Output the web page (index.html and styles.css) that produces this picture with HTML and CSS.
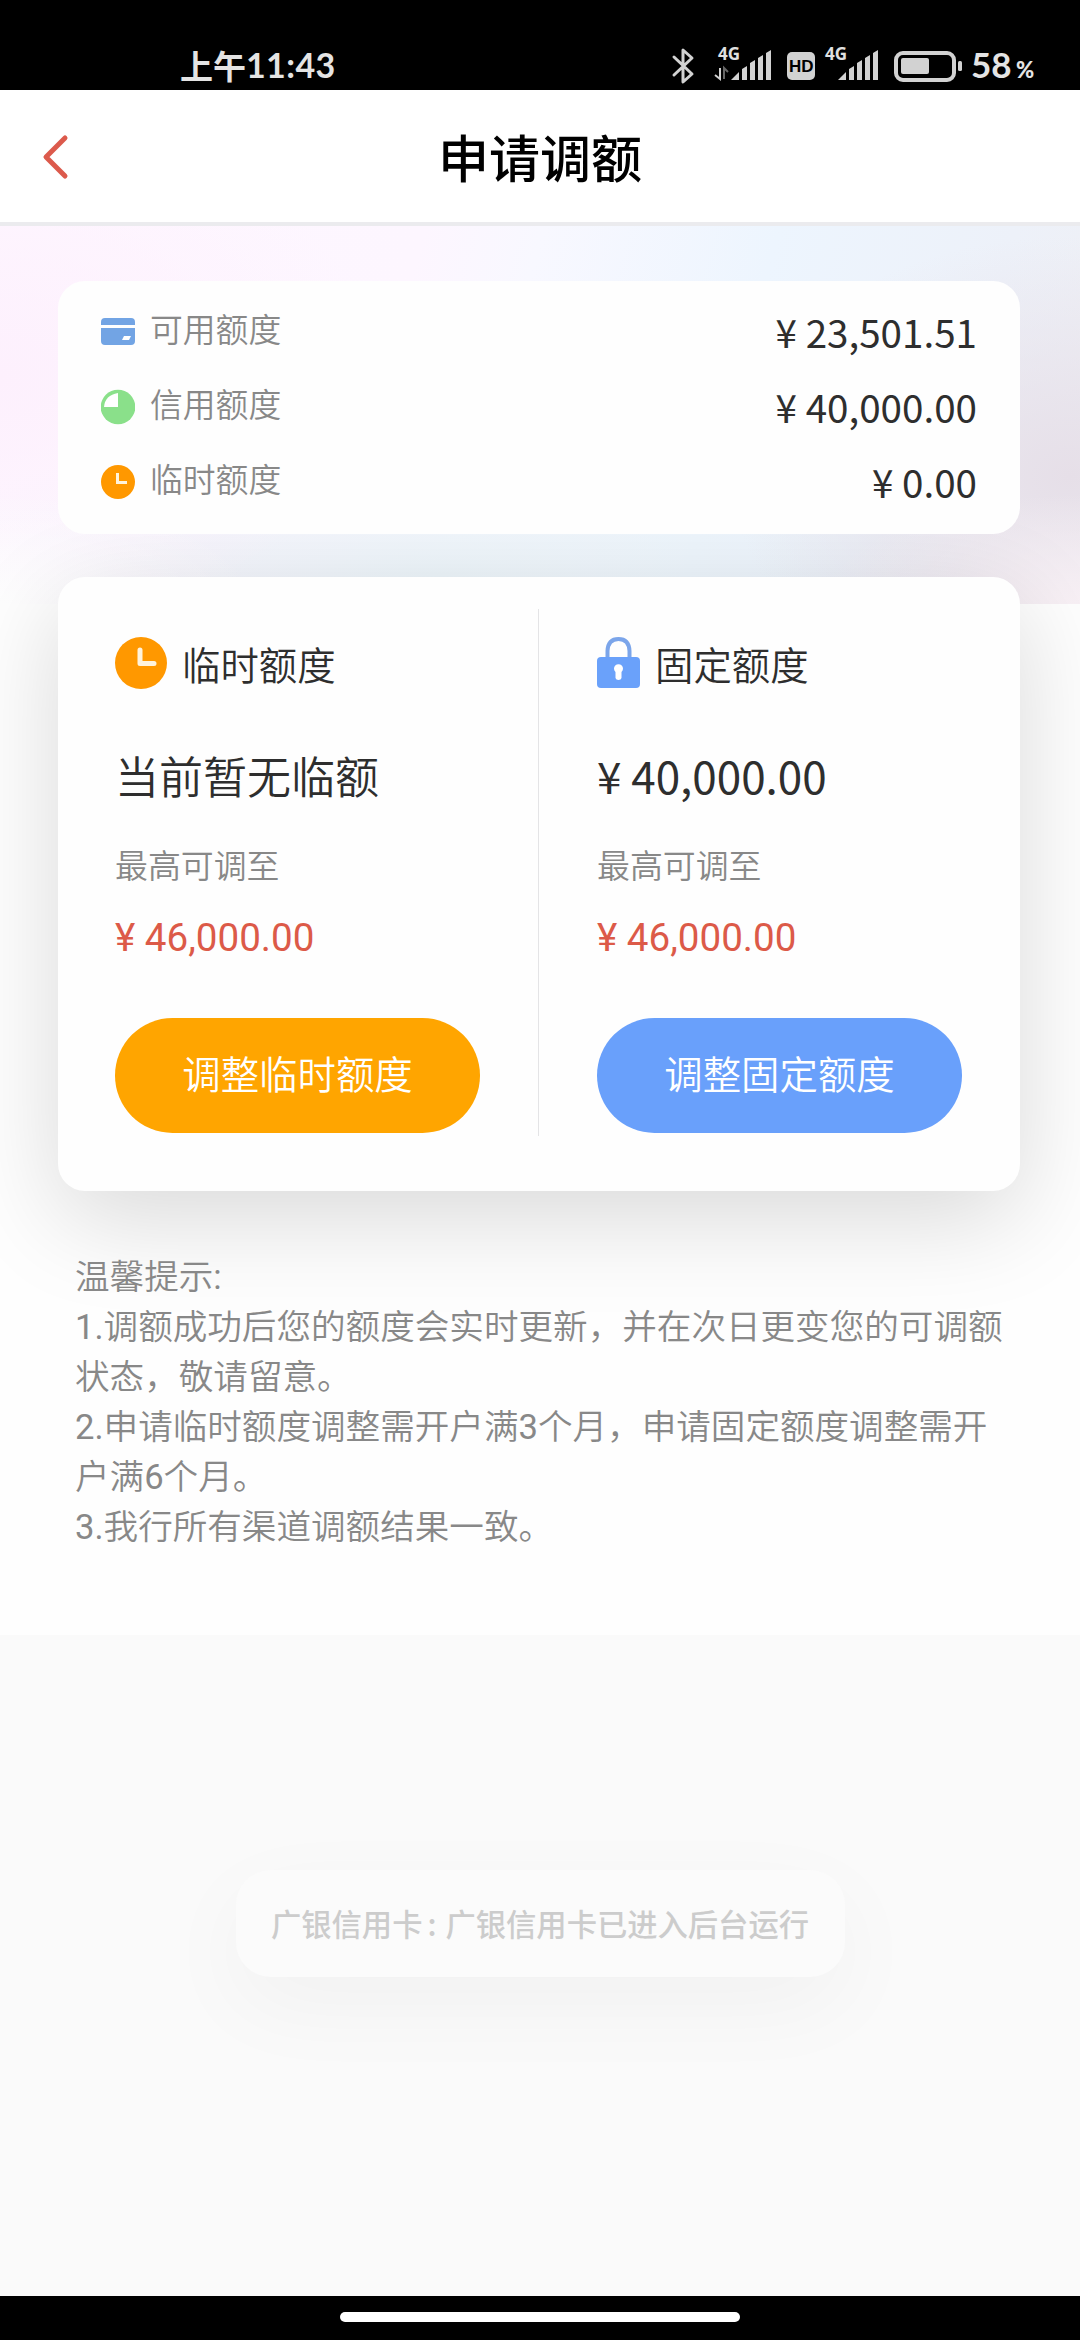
FILE: index.html
```html
<!DOCTYPE html>
<html lang="zh-CN">
<head>
<meta charset="utf-8">
<title>申请调额</title>
<link rel="stylesheet" href="styles.css">
</head>
<body>
<div class="screen">
  <div class="status">
    <span class="time">上午<b class="clock">11:43</b></span>
    <svg class="status-icons" width="390" height="46" viewBox="0 -4 390 46">
      <g fill="none" stroke="#d2d2d2" stroke-width="3" stroke-linejoin="round" stroke-linecap="round">
        <path d="M4 11L22 28L13 36V4L22 12L4 29"/>
      </g>
      <text class="net" x="48" y="14">4G</text>
      <path d="M50 22V33L45 29" fill="none" stroke="#d2d2d2" stroke-width="2"/>
      <path d="M54 33V22L58 26" fill="none" stroke="#666" stroke-width="2"/>
      <g fill="#d2d2d2">
        <path d="M61 34L69 26V34ZM72 23L77 20V34H72ZM80 17L85 14V34H80ZM88 12L93 9V34H88ZM96 7L101 4V34H96Z"/>
        <rect x="117" y="6" width="28" height="28" rx="5"/>
        <path d="M168 34L176 26V34ZM179 23L184 20V34H179ZM187 17L192 14V34H187ZM195 12L200 9V34H195ZM203 7L208 4V34H203Z"/>
        <rect x="231" y="12" width="28" height="16" rx="2"/>
        <rect x="288" y="15" width="4" height="10" rx="1.5"/>
      </g>
      <text class="hd" x="119" y="26">HD</text>
      <text class="net" x="155" y="14">4G</text>
      <rect x="226" y="7" width="58" height="27" rx="7" fill="none" stroke="#d2d2d2" stroke-width="4"/>
      <text class="battery" x="301" y="32">58</text>
      <text class="percent" x="346" y="32">%</text>
    </svg>
  </div>
  <header class="header">
    <svg class="back" width="30" height="48" viewBox="0 0 30 48"><path d="M23 5L4 24L23 43" fill="none" stroke="#dc5a4c" stroke-width="5" stroke-linecap="round" stroke-linejoin="round"/></svg>
    <h1 class="title">申请调额</h1>
  </header>
  <main class="page">
    <section class="summary">
      <div class="row">
        <svg width="34" height="36" viewBox="0 0 34 36"><path d="M4 4H30Q34 4 34 8V11H0V8Q0 4 4 4ZM0 14H34V27Q34 31 30 31H4Q0 31 0 27Z" fill="#72a4e4"/><path d="M23 22H30L28 26H21Z" fill="#fff"/></svg>
        <span class="label">可用额度</span><span class="value">¥ 23,501.51</span>
      </div>
      <div class="row">
        <svg width="34" height="36" viewBox="0 0 34 36"><circle cx="17" cy="18" r="17.3" fill="#8ae08a"/><path d="M17 4V18H3Q4 6 17 4Z" fill="#fff"/></svg>
        <span class="label">信用额度</span><span class="value">¥ 40,000.00</span>
      </div>
      <div class="row">
        <svg width="34" height="36" viewBox="0 0 34 36"><circle cx="17" cy="18" r="17" fill="#ff9800"/><path d="M16.5 9V18.5H26" fill="none" stroke="#fff3dd" stroke-width="3"/></svg>
        <span class="label">临时额度</span><span class="value">¥ 0.00</span>
      </div>
    </section>
    <section class="limits">
      <div class="limit">
        <div class="limit-head">
          <svg width="52" height="52" viewBox="0 0 52 52"><circle cx="26" cy="26" r="26" fill="#ff9800"/><path d="M25 13V26.500H39" fill="none" stroke="#fff3dd" stroke-width="5" stroke-linecap="round" stroke-linejoin="round"/></svg>
          <span>临时额度</span>
        </div>
        <div class="current">当前暂无临额</div>
        <div class="caption">最高可调至</div>
        <div class="maximum">¥ 46,000.00</div>
        <button class="button button-temp">调整临时额度</button>
      </div>
      <div class="divider"></div>
      <div class="limit">
        <div class="limit-head">
          <svg width="43" height="52" viewBox="0 0 43 52"><path d="M10.500 22V14Q11 2 21.500 2T32.500 14V22" fill="none" stroke="#7ba5ea" stroke-width="4"/><rect y="20" width="43" height="31" rx="4" fill="#6aa1fa"/><path d="M18.500 35A4.500 4.500 0 1 1 24.500 35V41Q24 43 21.500 43T18.500 41Z" fill="#fff"/></svg>
          <span>固定额度</span>
        </div>
        <div class="current current-amount">¥ 40,000.00</div>
        <div class="caption">最高可调至</div>
        <div class="maximum">¥ 46,000.00</div>
        <button class="button button-fixed">调整固定额度</button>
      </div>
    </section>
    <section class="tips">
      <p>温馨提示:</p>
      <p>1.调额成功后您的额度会实时更新，并在次日更变您的可调额<br>状态，敬请留意。</p>
      <p>2.申请临时额度调整需开户满3个月，申请固定额度调整需开<br>户满6个月。</p>
      <p>3.我行所有渠道调额结果一致。</p>
    </section>
  </main>
  <div class="rest">
    <div class="toast">广银信用卡<span class="colon">:</span>广银信用卡已进入后台运行</div>
  </div>
  <div class="navbar"><div class="handle"></div></div>
</div>
</body>
</html>
```
FILE: styles.css
```css
* { box-sizing: border-box; }
body { margin: 0; font-family: "Noto Sans CJK SC", sans-serif; font-weight: 350; color: #2e2e2e; }
p, h1 { margin: 0; }
svg { display: block; flex: none; }
.screen { display: flex; flex-direction: column; width: 1080px; height: 2340px; background: #fafafa; overflow: hidden; }

.status { display: flex; justify-content: space-between; height: 90px; padding: 40px 20px 0 180px; background: #000; color: #e4e4e4; }
.status-icons { overflow: visible; margin-top: 2px; }
.time { display: flex; font: 700 33px/50px "Noto Sans CJK SC", sans-serif; }
.clock { font: 700 34px/50px Lato, sans-serif; letter-spacing: .4px; }
.net { font: 700 17px "Noto Sans", sans-serif; fill: #e0e0e0; }
.hd { font: 700 17px "Liberation Sans", sans-serif; fill: #000; }
.battery { font: 700 35px Lato, sans-serif; fill: #e4e4e4; }
.percent { font: 900 22px Lato, sans-serif; fill: #e4e4e4; }

.header { display: grid; grid-template-columns: 180px 1fr 180px; align-items: center; height: 136px; border-bottom: 4px solid #ebebee; background: #fff; }
.back { margin: 2px 0 0 42px; }
.title { color: #000; font-size: 51px; font-weight: 500; line-height: 60px; text-align: center; }

.page {
  height: 1409px; padding: 55px 60px 0 58px;
  background:
    radial-gradient(ellipse 260px 110px at 0 378px, #fefefe 0%, #fefefe00 100%) 0 0 / 100% 378px no-repeat,
    radial-gradient(ellipse 260px 110px at 1080px 378px, #f8f0f5 0%, #f8f0f500 100%) 0 0 / 100% 378px no-repeat,
    radial-gradient(ellipse 380px 260px at 0 150px, #fdf0fd 0%, #fdf0fd00 100%) 0 0 / 100% 378px no-repeat,
    radial-gradient(ellipse 340px 240px at 1070px 250px, #e6dfe8 0%, #e6dfe800 100%) 0 0 / 100% 378px no-repeat,
    radial-gradient(ellipse 560px 150px at 440px 350px, #edf5fa 0%, #edf5fa00 100%) 0 0 / 100% 378px no-repeat,
    linear-gradient(105deg, #fef7ff 0%, #fdf6ff 36%, #f8f8ff 46%, #edf5fe 66%, #edf1f9 86%, #efeff4 100%) 0 0 / 100% 378px no-repeat,
    #fefefe;
}
.summary { position: relative; height: 253px; padding: 12px 43px 0 43px; border-radius: 27px; background: #fefefe; }
.row { display: flex; align-items: center; height: 75px; }
.row svg { margin-top: 2px; }
.label { margin: -6px auto 0 15px; color: #888; font-size: 32.8px; line-height: 48px; }
.value { font-size: 38.6px; font-weight: 400; line-height: 48px; }

.limits { display: flex; height: 614px; margin-top: 43px; padding: 32px 58px 0 57px; border-radius: 27px; background: #fefefe; box-shadow: 0 27px 100px rgba(0, 0, 0, .15); }
.limit { width: 365px; padding-top: 28px; }
.divider { width: 2px; height: 527px; margin: 0 58px 0 58px; background: #e4e4e6; }
.limit-head { display: flex; gap: 15px; height: 52px; font-size: 38.4px; line-height: 52px; }
.current { margin-top: 58px; font-size: 44px; line-height: 56px; }
.current-amount { font-weight: 400; }
.caption { margin-top: 37px; color: #888; font-size: 32.9px; line-height: 48px; }
.maximum { margin-top: 26px; color: #dc5a48; font: 38.6px/48px Roboto, sans-serif; }
.button { display: block; width: 365px; height: 115px; margin-top: 56px; padding: 0 0 7px; border: 0; border-radius: 58px; color: #fff; font: 350 38.4px/108px "Noto Sans CJK SC", sans-serif; }
.button-temp { background: #ffa500; }
.button-fixed { background: #69a0fb; }

.tips { margin: 61px -20px 0 17px; color: #888; font: 400 34.6px/50px Roboto, "Noto Sans CJK SC DemiLight", "Noto Sans CJK SC", sans-serif; }

.rest { display: flex; justify-content: center; align-items: flex-start; flex: 1; padding-top: 235px; background: #fafafa; }
.toast { width: 609px; height: 107px; border-radius: 35px; background: #fbfbfb; box-shadow: 0 28px 90px rgba(0, 0, 0, .04); color: #ccc; font-size: 30.3px; font-weight: 500; line-height: 106px; text-align: center; white-space: nowrap; }
.colon { display: inline-block; width: 23px; text-align: left; padding-left: 5px; }

.navbar { display: flex; justify-content: center; height: 44px; padding-top: 16px; background: #000; }
.handle { width: 400px; height: 10px; border-radius: 5px; background: #fff; }
```
